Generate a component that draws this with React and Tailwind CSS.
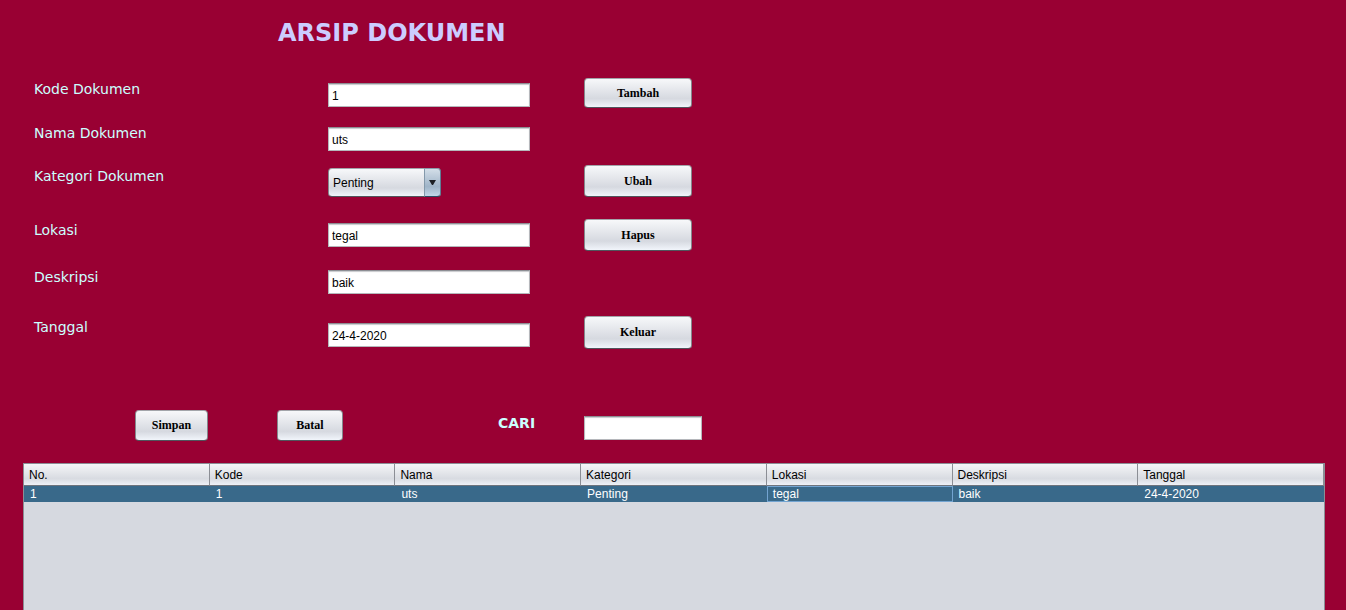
import { useState } from 'react';

const buttonLook =
  'shrink-0 rounded-[4px] border border-[#85888d] border-t-[#a3a5aa] border-b-[#50555d] bg-linear-to-b from-[#f7f8fa] via-[#d6d9e0] via-70% to-[#f1f5fb] pb-px text-center font-["Liberation_Serif",serif] text-xs font-bold text-black active:brightness-90';
const fieldLook =
  'h-6 border border-[#b5b7bb] border-t-[#8d8f94] bg-white pl-[3px] pr-1 pt-px font-["Liberation_Sans",sans-serif] text-xs text-black inset-shadow-[0_1px_1px_#c8c9cd] outline-none';

const rows = [
  { id: 'kode', label: 'Kode Dokumen', size: 'h-[29px] mb-[15px]', action: 'Tambah', actionSize: 'h-[30px]' },
  { id: 'nama', label: 'Nama Dokumen', size: 'h-[29px] mb-[14px]' },
  { id: 'kategori', label: 'Kategori Dokumen', size: 'h-8 mb-[22px]', action: 'Ubah', actionSize: 'h-8' },
  { id: 'lokasi', label: 'Lokasi', size: 'h-7 mb-[19px]', action: 'Hapus', actionSize: 'h-8' },
  { id: 'deskripsi', label: 'Deskripsi', size: 'h-7 mb-[22px]' },
  { id: 'tanggal', label: 'Tanggal', size: 'h-[31px]', action: 'Keluar', actionSize: 'h-[33px]' },
];

const columns = ['No.', 'Kode', 'Nama', 'Kategori', 'Lokasi', 'Deskripsi', 'Tanggal'];
const records = [['1', '1', 'uts', 'Penting', 'tegal', 'baik', '24-4-2020']];

function CategorySelect({ id, value, onChange }) {
  return (
    <div className="relative h-[29px] w-[113px]">
      <select
        id={id}
        value={value}
        onChange={onChange}
        className='h-full w-full appearance-none rounded-[4px] border border-[#85888d] border-t-[#a3a5aa] border-b-[#50555d] bg-linear-to-b from-[#f7f8fa] via-[#d6d9e0] via-70% to-[#f1f5fb] pl-1 pr-5 font-["Liberation_Sans",sans-serif] text-xs text-black outline-none'
      >
        <option>Penting</option>
        <option>Biasa</option>
      </select>
      <span className="pointer-events-none absolute inset-y-0 right-0 flex w-[17px] items-center justify-center rounded-r-[4px] border border-[#5f7d95] border-t-[#8b9cab] border-b-[#2c4a63] border-l-[#8499ab] bg-linear-to-b from-[#d3dee8] via-[#9fb4c8] via-65% to-[#c2d7e9]">
        <svg width="7" height="6" viewBox="0 0 7 6" aria-hidden="true">
          <path d="M0 0h7L4 5H3z" fill="#1c1f24" />
        </svg>
      </span>
    </div>
  );
}

export default function App() {
  const [values, setValues] = useState({
    kode: '1',
    nama: 'uts',
    kategori: 'Penting',
    lokasi: 'tegal',
    deskripsi: 'baik',
    tanggal: '24-4-2020',
  });
  const [query, setQuery] = useState('');
  const update = (id) => (e) => setValues({ ...values, [id]: e.target.value });

  return (
    <main className='flex min-h-screen flex-col bg-[#990033] font-["DejaVu_Sans",sans-serif]'>
      <h1 className="pl-[278px] pt-[17px] text-2xl leading-8 font-bold text-[#ccccff]">ARSIP DOKUMEN</h1>

      <form className="pl-[34px] pt-[29px]" onSubmit={(e) => e.preventDefault()}>
        {rows.map((row) => (
          <div key={row.id} className={`flex items-end ${row.size}`}>
            <label htmlFor={row.id} className="w-[294px] shrink-0 self-start text-sm leading-[22px] text-[#ccffff]">
              {row.label}
            </label>
            <div className="w-64 shrink-0">
              {row.id === 'kategori' ? (
                <CategorySelect id={row.id} value={values.kategori} onChange={update(row.id)} />
              ) : (
                <input
                  id={row.id}
                  type="text"
                  value={values[row.id]}
                  onChange={update(row.id)}
                  className={`block w-[202px] ${fieldLook}`}
                />
              )}
            </div>
            {row.action && (
              <button type="button" className={`w-[108px] self-start ${row.actionSize} ${buttonLook}`}>
                {row.action}
              </button>
            )}
          </div>
        ))}
      </form>

      <div className="mt-[63px] flex h-[30px] items-end pl-[135px]">
        <button type="button" className={`h-[31px] w-[73px] self-start ${buttonLook}`}>Simpan</button>
        <button type="button" className={`ml-[69px] h-[31px] w-[66px] self-start ${buttonLook}`}>Batal</button>
        <label htmlFor="cari" className="ml-[155px] w-[86px] shrink-0 self-start text-sm leading-[26px] font-bold text-[#ccffff]">
          CARI
        </label>
        <input
          id="cari"
          type="text"
          value={query}
          onChange={(e) => setQuery(e.target.value)}
          className={`w-[118px] ${fieldLook}`}
        />
      </div>

      <section className="mt-[23px] mr-[21px] ml-[23px] flex-1 border border-b-0 border-[#8b8e95] bg-[#d6d9e0]">
        <table className='w-full table-fixed border-separate border-spacing-0 font-["Liberation_Sans",sans-serif] text-xs'>
          <thead>
            <tr>
              {columns.map((name) => (
                <th
                  key={name}
                  scope="col"
                  className="h-[22px] border-r border-b border-r-[#8b8e95] border-b-[#6f747d] bg-linear-to-b from-[#f5f6f8] via-[#d8dbe1] via-70% to-[#eef1f7] px-[5px] py-0 text-left font-normal text-black"
                >
                  {name}
                </th>
              ))}
            </tr>
          </thead>
          <tbody>
            {records.map((record) => (
              <tr key={record[0]} className="bg-[#39698a] text-white">
                {record.map((cell, i) => (
                  <td
                    key={columns[i]}
                    className={`h-4 border px-[5px] py-0 leading-[14px] ${
                      columns[i] === 'Lokasi' ? 'border-[#73a4d1]' : 'border-transparent'
                    }`}
                  >
                    {cell}
                  </td>
                ))}
              </tr>
            ))}
          </tbody>
        </table>
      </section>
    </main>
  );
}
